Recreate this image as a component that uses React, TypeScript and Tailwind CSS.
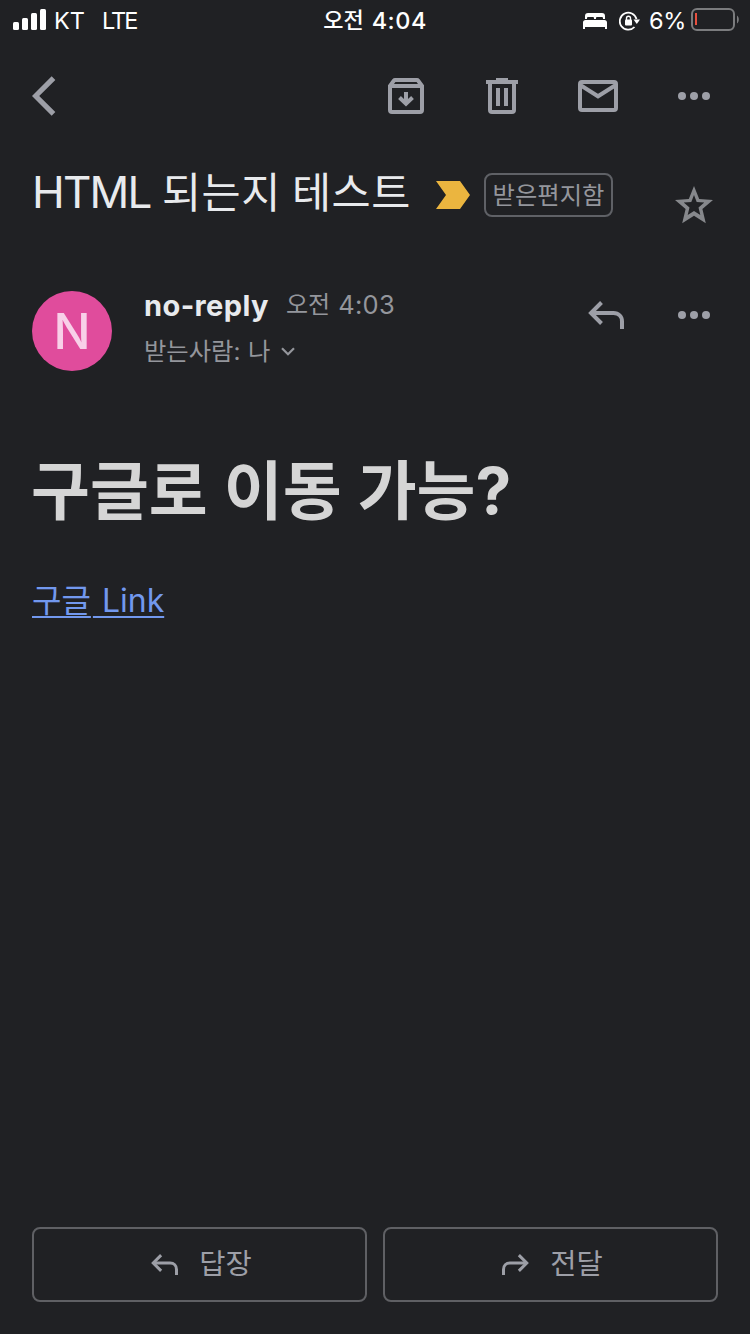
import React from "react";

// ── 공통 아이콘 ──
function MoreIcon() {
  return (
    <svg width="32" height="8" viewBox="0 0 32 8" fill="currentColor">
      <circle cx="4" cy="4" r="4" />
      <circle cx="16" cy="4" r="4" />
      <circle cx="28" cy="4" r="4" />
    </svg>
  );
}

function ReplyIcon({ className }: { className?: string }) {
  return (
    <svg
      viewBox="0 0 36 28"
      fill="none"
      stroke="currentColor"
      strokeWidth="4"
      className={className}
    >
      <path d="M13.5 1.5 3 12l10.5 10.5" />
      <path d="M3 12h22.5c5 0 8.5 3.5 8.5 8.500V28" />
    </svg>
  );
}

// ── 상태 표시줄 ──
function StatusBar() {
  return (
    <div className="relative flex h-10 items-center justify-between text-white">
      <div className="flex items-center pl-[13px] text-[23.5px] leading-10">
        <svg width="33" height="21" viewBox="0 0 33 21" fill="currentColor" className="mb-[2px]">
          <rect x="0" y="13" width="6" height="8" rx="1.5" />
          <rect x="9" y="9" width="6" height="12" rx="1.5" />
          <rect x="18" y="4" width="6" height="17" rx="1.5" />
          <rect x="27" y="0" width="6" height="21" rx="1.5" />
        </svg>
        <span className="ml-[8px] mt-[2px]">KT</span>
        <span className="ml-[17px] mt-[2px] tracking-[-1.9px]">LTE</span>
      </div>

      {/* 시각은 항상 화면 중앙 */}
      <div className="absolute inset-x-0 top-px flex items-baseline justify-center font-medium leading-10">
        <span className="relative -top-px text-[22px]">오전</span>
        <span className="ml-2 text-[23.5px] tracking-[0.5px]">4:04</span>
      </div>

      <div className="flex items-center pr-[11px]">
        <svg width="24" height="16" viewBox="0 0 24 16" fill="currentColor" className="mt-[2px]">
          <path d="M2 6V3c0-2 1-3 3-3h14c2 0 3 1 3 3v3h-2V5.300C20 4.400 19.500 4 18.700 4H14.300c-.9 0-1.300.4-1.300 1.300V6h-2v-.7C11 4.400 10.600 4 9.700 4H5.300C4.500 4 4 4.400 4 5.300V6z" />
          <path d="M0 16V9.500C0 8 1 7 2.500 7h19C23 7 24 8 24 9.500V16h-2v-2H2v2z" />
        </svg>
        <svg width="22" height="20" viewBox="0 0 22 20" fill="none" className="ml-3 mt-[1px]">
          <path d="M15.500 16A8.500 8.500 0 1 1 17.500 8" stroke="currentColor" strokeWidth="1.800" />
          <path d="M14.500 8.500h6.500l-3.200 4.500z" fill="currentColor" />
          <rect x="6" y="8.500" width="7" height="6" rx="1" fill="currentColor" />
          <path d="M7.500 9V7.300a2 2 0 0 1 4 0V9" stroke="currentColor" strokeWidth="1.400" />
        </svg>
        <span className="ml-[8px] mt-[2px] text-[23.5px] leading-10 tracking-[-0.3px]">6%</span>
        <svg width="48" height="23" viewBox="0 0 48 23" fill="none" className="mb-[1px] ml-[5px]">
          <rect x="1" y="1" width="42" height="21" rx="5" stroke="#7b7c7e" strokeWidth="2" />
          <rect x="4" y="5" width="2" height="12" fill="#e8503f" />
          <path d="M46 7.500c2.400 1.500 2.400 6.500 0 8z" fill="#7b7c7e" />
        </svg>
      </div>
    </div>
  );
}

// ── 상단 툴바 ──
function Toolbar() {
  return (
    <div className="flex h-28 items-center pl-8 pr-10 text-[#9d9fa7]">
      <button aria-label="뒤로">
        <svg width="24" height="40" viewBox="0 0 24 40" fill="none" stroke="currentColor" strokeWidth="5.200">
          <path d="M21.500 2.200 3.600 20l17.900 17.800" />
        </svg>
      </button>

      <div className="ml-auto flex items-center gap-[60px]">
        <button aria-label="보관" className="mr-[2px]">
          <svg width="36" height="36" viewBox="0 0 36 36" fill="none" stroke="currentColor" strokeWidth="4">
            <path d="M2 8 6 2.500C6.300 2.100 6.700 2 7 2h22c.4 0 .8.2 1 .5L34 8v24c0 1.200-.8 2-2 2H4c-1.200 0-2-.8-2-2z" />
            <path d="M3 8h30" />
            <path d="M18 14v11" />
            <path d="m11.500 19.500 6.500 6.200 6.500-6.200" />
          </svg>
        </button>
        <button aria-label="삭제">
          <svg width="32" height="36" viewBox="0 0 32 36" fill="none" stroke="currentColor" strokeWidth="4">
            <path d="M0 4h32M10 2h12" />
            <path d="M4 4v28c0 1.200.8 2 2 2h20c1.200 0 2-.8 2-2V4" />
            <path d="M12 10v18M20 10v18" />
          </svg>
        </button>
        <button aria-label="읽지 않음으로 표시">
          <svg width="40" height="32" viewBox="0 0 40 32" fill="none" stroke="currentColor" strokeWidth="4">
            <rect x="2" y="2" width="36" height="28" rx="2" />
            <path d="m3 5.500 17 10.800L37 5.500" />
          </svg>
        </button>
        <button aria-label="더보기">
          <MoreIcon />
        </button>
      </div>
    </div>
  );
}

// ── 제목 + 라벨 ──
function Subject() {
  return (
    <div className="flex h-[92px] items-start pl-8 pr-[36px]">
      <h2 className="mt-[18px] flex items-baseline whitespace-nowrap text-[44px] leading-[44px] text-[#e8eaed]">
        <span className="w-[130px] tracking-[-1.8px]">HTML</span>
        <span className="w-[130px] text-[42.5px] tracking-[0.5px]">되는지</span>
        <span className="w-[120px] text-[42.5px] tracking-[0.5px]">테스트</span>
      </h2>
      <svg width="34" height="28" viewBox="0 0 34 28" className="ml-[24px] mt-[29px]">
        <path d="M0 0h24l10 14-10 14H0l10-14z" fill="#ebb53f" />
      </svg>
      <span className="ml-[14px] mt-[21px] h-11 w-[129px] whitespace-nowrap rounded-lg border-2 border-[#5f6166] text-center text-[24.3px] leading-10 text-[#94969c]">
        받은편지함
      </span>
      <button aria-label="별표" className="ml-auto mt-[34px] text-[#86888c]">
        <svg width="40" height="38" viewBox="0 0 40 38" fill="currentColor">
          <path
            fillRule="evenodd"
            d="M20 0l5.200 12.900 13.800 1.100-10.600 9 3.400 14.300L20 29.700 8.200 37.300 11.600 23 1 14l13.800-1.100zM20 9l-2.700 7-7.600.6 5.800 4.900-1.800 7.500 6.300-4 6.300 4-1.800-7.500 5.800-4.900-7.600-.6z"
          />
        </svg>
      </button>
    </div>
  );
}

// ── 보낸사람 정보 ──
function Sender() {
  return (
    <div className="flex h-[156px] items-start pl-8 pr-10 pt-[47px]">
      <div className="flex size-20 items-center justify-center rounded-full bg-[#e04c9c] text-[49px] font-medium leading-none text-[#f8d0e8]">
        N
      </div>
      <div className="ml-8 whitespace-nowrap">
        <div className="mt-[-1px] flex h-8 items-start leading-8">
          <span className="w-[142px] text-[29px] font-bold tracking-[0.4px] text-[#e8eaed]">
            no-reply
          </span>
          <span className="mt-[-1px] text-[24px] text-[#94969c]">오전</span>
          <span className="ml-2 mt-[-1px] text-[25.5px] tracking-[0.3px] text-[#94969c]">4:03</span>
        </div>
        <div className="mt-[13px] flex h-8 items-center text-[24.3px] leading-8 text-[#94969c]">
          <span className="w-[104px]">받는사람:</span>
          <span>나</span>
          <svg
            width="14"
            height="9"
            viewBox="0 0 14 9"
            fill="none"
            stroke="currentColor"
            strokeWidth="2.200"
            className="ml-[11px] mt-[1px]"
          >
            <path d="m1 1.200 6 6 6-6" />
          </svg>
        </div>
      </div>
      <div className="ml-auto flex items-start text-[#9d9fa7]">
        <button aria-label="답장" className="mt-[10px]">
          <ReplyIcon className="h-7 w-9" />
        </button>
        <button aria-label="더보기" className="ml-[54px] mt-[20px]">
          <MoreIcon />
        </button>
      </div>
    </div>
  );
}

// ── 하단 버튼 ──
const ACTIONS = [
  { label: "답장", icon: <ReplyIcon className="h-[21px] w-[27px]" /> },
  { label: "전달", icon: <ReplyIcon className="h-[21px] w-[27px] -scale-x-100" /> },
];

export default function App() {
  return (
    <div className="flex h-[1334px] w-[750px] flex-col overflow-hidden bg-[#202124] font-[Inter,'Noto_Sans_CJK_KR',sans-serif]">
      <StatusBar />
      <Toolbar />
      <Subject />
      <Sender />

      {/* 메일 본문 */}
      <main className="px-8 pt-[51px]">
        <h1 className="ml-[-1px] whitespace-nowrap text-[64px] font-bold leading-[80px] [word-spacing:1px] text-[#d5d5d5]">
          구글로 이동 가능?
        </h1>
        <a
          href="#"
          className="mt-[50px] flex items-baseline text-[32px] leading-10 text-[#7298ee]"
        >
          <span className="underline decoration-2 underline-offset-4 [text-decoration-skip-ink:none]">
            구글
          </span>
          <span className="ml-[2px] whitespace-pre underline decoration-2 underline-offset-4 [text-decoration-skip-ink:none]">
            {" Link"}
          </span>
        </a>
      </main>

      <footer className="mt-auto grid grid-cols-2 gap-4 px-8 pb-8">
        {ACTIONS.map((action) => (
          <button
            key={action.label}
            className="flex h-[75px] items-center justify-center gap-[21px] rounded-lg border-2 border-[#5f6064] pb-[1px] pl-[4px] text-[28.5px] leading-none text-[#9d9fa7]"
          >
            {action.icon}
            <span>{action.label}</span>
          </button>
        ))}
      </footer>
    </div>
  );
}
